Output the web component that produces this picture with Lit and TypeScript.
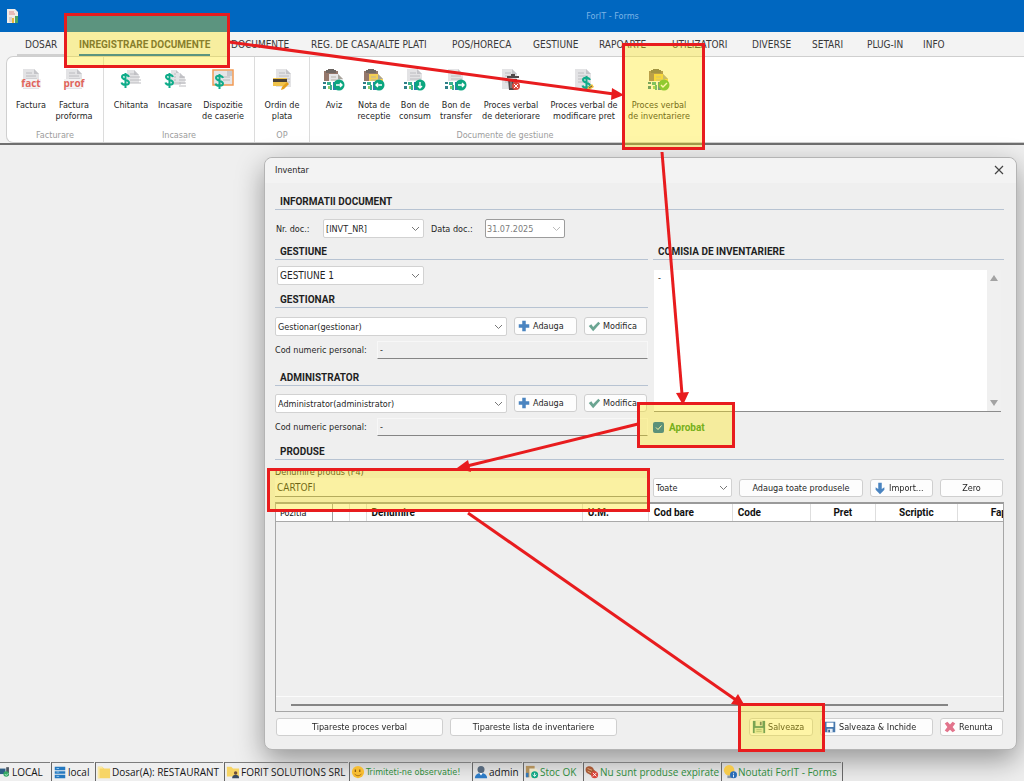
import { LitElement, html, svg, css, nothing } from "lit";
import { customElement, state, query } from "lit/decorators.js";
import { classMap } from "lit/directives/class-map.js";

const sheet = (x = 4, y = 1, w = 17, h = 20) => svg`
  <path d="M${x} ${y}h${w - 5}l5 5v${h - 5}h${-w}z" fill="#e3e3e5"/>
  <path d="M${x + w - 5} ${y}v5h5z" fill="#c4c4c8"/>
  <path d="M${x + 3} ${y + 4}h6M${x + 3} ${y + 7}h10M${x + 3} ${y + 10}h11M${x + 3} ${y + 13}h11" stroke="#bcbcc0" stroke-width="1"/>`;

const board = (color: string) => svg`
  <path d="M1 2h14v13H1z" fill="#94776b"/><path d="M5 0h6v3H5z" fill="#6b6460"/><path d="M3 1h10v3H3z" fill="#6f6762"/>
  <path d="M6 5h9l5 5v8H6z" fill="${color}"/><path d="M15 5v5h5z" fill="#a9a49c"/>
  <path d="M8 8h5M8 11h9" stroke="#b9b3a8"/>`;

const stock = svg`
  <path d="M0 12h13v10H0z" fill="#fff"/>
  <path d="M0 13h3v2H0zM0 17h3v3H0z" fill="#2f7f88"/><path d="M4 13h4v3H4zM7 16h2v5H7z" fill="#38b08f"/>
  <path d="M5 17h2v3H5z" fill="#8ccf6a"/><path d="M10 13h3v8h-3z" fill="#3477b5"/>`;

const badge = (d: string, color = "#0ba67f") => svg`
  <circle cx="16" cy="16" r="5.500" fill="${color}"/>
  <path d="${d}" stroke="#fff" stroke-width="1.4" fill="none"/>`;

const RIGHT = "M13 16h6M17 14l2 2-2 2";
const LEFT = "M19 16h-6M15 14l-2 2 2 2";
const DOWN = "M16 13v6M14 17l2 2 2-2";
const CHECK = "M13 16l2 2 4-4";

const dollar = (x: number, y: number) => svg`
  <path d="M${x + 8} ${y + 4}c-1-3-7-3-7 0s7 2.500 7 5.500-7 3-7.500 0M${x + 4.5} ${y}v15"
    fill="none" stroke="#10ac8a" stroke-width="2"/>`;

const ribbonIcons: Record<string, unknown> = {
  fact: svg`${sheet(3, 0, 16)}<path d="M1 10h20v9H1z" fill="#f3f3f4"/><text x="11" y="18" class="stamp">fact</text>`,
  prof: svg`${sheet(3, 0, 16)}<path d="M1 10h20v9H1z" fill="#f3f3f4"/><text x="11" y="18" class="stamp">prof</text>`,
  receipt: svg`${sheet(7, 1, 12, 13)}${dollar(1, 4)}`,
  cashin: svg`${sheet(7, 1, 10, 15)}${sheet(12, 4, 9, 9)}${dollar(1, 4)}`,
  slip: svg`<path d="M1 1h20v15H1z" fill="#e5e5e7" stroke="#f29a54" stroke-width="1.500"/><path d="M15 2h5v5h-5z" fill="#c8c8cc"/><path d="M11 8h7M11 11h7" stroke="#bbb"/>${dollar(3, 5)}`,
  card: svg`${sheet(5, 0, 15, 18)}<path d="M2 9h14v8H2z" fill="#f0c34a"/><path d="M2 10h14v3H2z" fill="#473f36"/><path d="M11 18l5-5 2 2-5 5-3 1z" fill="#e4a01d"/>`,
  aviz: svg`${board("#e6e6e8")}${stock}${badge(RIGHT)}`,
  nota: svg`${board("#f4cf55")}${stock}${badge(LEFT)}`,
  consum: svg`${sheet(3, 0, 15)}${stock}${badge(DOWN)}`,
  transfer: svg`${sheet(3, 0, 15)}${stock}${badge(RIGHT)}`,
  trash: svg`${sheet(2, 0, 15)}<path d="M7 7h12v2H7zM11 5h4v2h-4zM8 10h9l-1 11H9z" fill="#50494a"/><path d="M11 11v8M14 11v8" stroke="#a9a3a3"/><circle cx="16" cy="17" r="4" fill="#dd4b40"/><path d="M14 15l4 4M18 15l-4 4" stroke="#fff"/>`,
  price: svg`${sheet(2, 0, 16, 20)}${dollar(9, 7)}<path d="M14 19l5-4 2 3-5 3z" fill="#f0bd36"/><path d="M16 19l3-2" stroke="#555"/>`,
  inventory: svg`${board("#f4cf55")}${stock}${badge(CHECK, "#52ba45")}`,
};

const smallIcons: Record<string, unknown> = {
  plus: svg`<path d="M6 2h4v4h4v4h-4v4H6v-4H2V6h4z" fill="#4a84c0"/>`,
  tick: svg`<path d="M2 8l3-2 2 3 6-6 2 2-8 9z" fill="#6ba592"/>`,
  down: svg`<path d="M6 2h4v7l3-2v3l-5 5-5-5V7l3 2z" fill="#4a84c0"/>`,
  disk: svg`<path d="M1 1h14v14H1z" fill="#2f7f7a"/><path d="M4 1h8v6H4z" fill="#e9efe4"/><path d="M3 9h10v6H3z" fill="#dbe9d4"/><path d="M9 2h2v4H9z" fill="#46617a"/><path d="M5 11h6M5 13h6" stroke="#8fae9c"/>`,
  diskBlue: svg`<path d="M2 2h12v12H2z" fill="#4778ad"/><path d="M4 3h8v5H4z" fill="#fff"/><path d="M5 10h6v4H5z" fill="#e4ecf5"/><path d="M6 11h2v3H6z" fill="#38608c"/>`,
  cross: svg`<path d="M2 4l3-2 3 3 3-3 3 2-3 4 3 4-3 2-3-3-3 3-3-2 3-4z" fill="#e2748c"/>`,
  pc: svg`<path d="M0 3h8v8H0z" fill="#2e5f86"/><path d="M9 1h4v12H9z" fill="#4d5560"/><circle cx="9" cy="11" r="4" fill="#34a963"/><path d="M7 11l2 2 3-3" stroke="#fff" fill="none"/>`,
  server: svg`<path d="M2 2h12v4H2zM2 7h12v3H2zM2 11h12v4H2z" fill="#2579c0"/><path d="M4 4h3M4 8h3M4 13h3" stroke="#9fd0f3"/>`,
  folder: svg`<path d="M1 2h5l2 2h7v11H1z" fill="#f7d566"/><path d="M1 2h5l1 2H3v11H1z" fill="#fbe9a4"/>`,
  folderUser: svg`<path d="M1 2h5l2 2h7v9H1z" fill="#f7d566"/><circle cx="11" cy="9" r="2" fill="#6b4d3b"/><path d="M7 15c0-5 8-5 8 0z" fill="#394a62"/>`,
  smile: svg`<circle cx="8" cy="8" r="7" fill="#f6bd32"/><path d="M5 5v3M10 5v3" stroke="#8d5c13" stroke-width="1.500"/><path d="M4 10c2 3 6 3 8 0" stroke="#a86a14" fill="none"/>`,
  user: svg`<circle cx="8" cy="5" r="4" fill="#56687c"/><path d="M1 15c0-8 14-8 14 0z" fill="#2d7ac4"/><path d="M6 9l2 3 2-3z" fill="#fff"/>`,
  stockOk: svg`<path d="M1 1h10v13H1z" fill="#b08f5b"/><path d="M5 4h8l2 3v8H5z" fill="#e9e3c8"/><path d="M1 9h3v5H1z" fill="#3477b5"/><circle cx="11" cy="11" r="4" fill="#12a584"/><path d="M11 9v4M9 11l2 2 2-2" stroke="#fff" fill="none"/>`,
  expired: svg`<path d="M1 3c4-3 8-1 9 2l3 3-4 5-5-3C1 9 0 6 1 3z" fill="#a65835"/><path d="M3 4l5 2M3 7l4 2" stroke="#e4b183"/><circle cx="11" cy="11" r="4" fill="#d8463c"/><path d="M9 9l4 4M13 9l-4 4" stroke="#fff"/>`,
  news: svg`<circle cx="7" cy="6" r="6" fill="#f4c94b"/><path d="M5 12h5v3H5z" fill="#8b97a3"/><circle cx="12" cy="11" r="4" fill="#2a6db8"/><path d="M12 9v1M12 11v3" stroke="#fff"/>`,
};

const icon = (name: string) =>
  html`<svg class="ico" viewBox="0 0 16 16" aria-hidden="true">${smallIcons[name]}</svg>`;

const tabs = [
  "DOSAR", "INREGISTRARE DOCUMENTE", "DOCUMENTE", "REG. DE CASA/ALTE PLATI", "POS/HORECA", "GESTIUNE",
  "RAPOARTE", "UTILIZATORI", "DIVERSE", "SETARI", "PLUG-IN", "INFO",
];

const groups = [
  { cls: "g-fact", title: "Facturare", items: [["fact", "Factura", ""], ["prof", "Factura", "proforma"]] },
  { cls: "g-inc", title: "Incasare", items: [["receipt", "Chitanta", ""], ["cashin", "Incasare", ""], ["slip", "Dispozitie", "de caserie"]] },
  { cls: "g-op", title: "OP", items: [["card", "Ordin de", "plata"]] },
  {
    cls: "g-gest", title: "Documente de gestiune", items: [
      ["aviz", "Aviz", ""], ["nota", "Nota de", "receptie"], ["consum", "Bon de", "consum"], ["transfer", "Bon de", "transfer"],
      ["trash", "Proces verbal", "de deteriorare"], ["price", "Proces verbal de", "modificare pret"], ["inventory", "Proces verbal", "de inventariere"],
    ],
  },
];

const columns = [
  ["c-poz", "Pozitia"], ["c-mini", ""], ["c-mini", ""], ["c-den", "Denumire"], ["c-um", "U.M."],
  ["c-bar", "Cod bare"], ["c-code", "Code"], ["c-pret", "Pret"], ["c-scr", "Scriptic"], ["c-fap", "Faptic"],
];

const statusItems = [
  ["s-server", "pc", "LOCAL"], ["s-db", "server", "local"], ["s-dosar", "folder", "Dosar(A): RESTAURANT"],
  ["s-firma", "folderUser", "FORIT SOLUTIONS SRL"], ["s-obs", "smile", "Trimiteti-ne observatie!"], ["s-user", "user", "admin"],
  ["s-stoc", "stockOk", "Stoc OK"], ["s-exp", "expired", "Nu sunt produse expirate"], ["s-news", "news", "Noutati ForIT - Forms"],
];

@customElement("app-root")
export class AppRoot extends LitElement {
  @state() private activeTab = 1;
  @query("#prod") private search!: HTMLInputElement;

  static styles = css`
    :host {
      display: flex; flex-direction: column; position: relative; min-height: 100vh; overflow: hidden;
      font: 9px/12px "DejaVu Sans Condensed", "DejaVu Sans", sans-serif; color: #1f1f1f; background: #efefef;
      --bold: "Roboto", sans-serif;
    }
    * { box-sizing: border-box; }
    button, input, select, textarea { font: inherit; color: inherit; margin: 0; }
    button { border: 0; background: none; padding: 0; }

    .titlebar {
      height: 32px; flex: none; background: #0067c0; color: #7db4e6; display: grid;
      grid-template-columns: 201px 1fr; align-items: center;
    }
    .titlebar svg { width: 14px; height: 16px; margin-left: 5px; }
    .titlebar span { text-align: center; }

    .tabs {
      display: grid; grid-template-columns: 62px 152px 80px 141px 81px 66px 73px 80px 60px 55px 56px 40px;
      height: 24px; flex: none; padding-left: 17px; background: #f3f3f3; font-size: 10px; color: #383838;
    }
    .tab { display: flex; text-align: left; white-space: nowrap; height: 24px; }
    .tab span { height: 24px; padding-top: 7px; border-bottom: 2px solid transparent; }
    .tab.first span { border-color: #d0d0d0; padding-left: 8px; width: 50px; }
    .tab.active span { border-color: #0067c0; color: #45453f; font-family: var(--bold); font-weight: 700; }

    .ribbon { flex: none; height: 89px; padding-left: 6px; background: #f3f3f3; border-bottom: 2px solid #6f6f6f; }
    .panel {
      display: flex; height: 87px; background: #fff; border: 1px solid #cfcfcf; border-right: 0;
      border-radius: 7px 0 0 7px;
    }
    .group { display: flex; flex-direction: column; border-right: 1px solid #dcdcdc; }
    .group:last-child { border-right: 0; }
    .group-buttons { display: grid; flex: 1; }
    .g-fact .group-buttons { grid-template-columns: 46px 40px; padding: 0 9px 0 1px; }
    .g-inc .group-buttons { grid-template-columns: 44px 44px 52px; padding: 0 5px; }
    .g-op .group-buttons { grid-template-columns: 54px; }
    .g-gest .group-buttons { grid-template-columns: 40px 40px 42px 40px 70px 76px 74px; padding: 0 4px; }
    .rb { display: flex; flex-direction: column; align-items: center; padding-top: 12px; line-height: 11px; white-space: nowrap; }
    .rb svg { width: 22px; height: 22px; margin-bottom: 9px; }
    .stamp { font: 700 10px "Open Sans", sans-serif; fill: #e0655c; text-anchor: middle; }
    .group-title { text-align: center; color: #9c9c9c; height: 14px; line-height: 14px; }

    .desk { flex: 1; display: flex; padding: 12px 7px 11px 264px; }
    .dialog {
      flex: 1; min-width: 0; border: 1px solid #b4b4b4; border-radius: 8px; background: #efefef;
      box-shadow: 0 10px 28px rgba(0, 0, 0, .38); display: flex; flex-direction: column; align-self: flex-start;
    }
    .dialog-title {
      display: flex; justify-content: space-between; align-items: center; height: 25px; flex: none;
      padding: 0 12px 2px 10px; background: #f3f3f3; border-radius: 8px 8px 0 0;
    }
    .close { display: flex; }
    .close svg { width: 10px; height: 10px; }
    .dialog-body { padding: 10px 12px 13px 10px; display: flex; flex-direction: column; }
    h2 {
      margin: 0; height: 17px; padding-left: 5px; border-bottom: 1px solid #b7c3d2;
      font: 700 10px/18px var(--bold);
    }
    .doc-row { display: flex; align-items: center; padding: 9px 0 5px 1px; }
    .doc-row .num-label { width: 38px; }
    .doc-row .num { width: 101px; margin: 0 7px 0 9px; }
    .doc-row .date-label { width: 45px; }
    .doc-row .date { width: 80px; margin-left: 9px; }
    .columns { display: grid; grid-template-columns: 373px 1fr; column-gap: 5px; }
    .col { display: flex; flex-direction: column; }
    select {
      appearance: none; height: 19px; border: 1px solid #d2d2d2; border-radius: 2px; padding: 0 18px 0 2px;
      background: #fff url("data:image/svg+xml,%3Csvg xmlns='http://www.w3.org/2000/svg' width='9' height='6'%3E%3Cpath d='M1 1l3.500 3.500L8 1' fill='none' stroke='%23777'/%3E%3C/svg%3E") no-repeat right 3px center;
    }
    select.date {
      border: 1px solid #9c9c9c; color: #7c7c7c; opacity: 1; padding-left: 1px;
      background-image: url("data:image/svg+xml,%3Csvg xmlns='http://www.w3.org/2000/svg' width='9' height='6'%3E%3Cpath d='M1 1l3.500 3.500L8 1' fill='none' stroke='%23bbb'/%3E%3C/svg%3E");
    }
    .gest { width: 147px; margin: 6px 0 6px 2px; font-size: 10px; }
    .person-row { display: grid; grid-template-columns: 1fr 63px 63px; column-gap: 7px; margin: 9px 0 4px; padding-right: 1px; }
    .person-row.second { margin-top: 8px; }
    .cnp { display: grid; grid-template-columns: 102px 1fr; align-items: center; height: 19px; }
    .cnp input {
      height: 18px; border: 1px solid #f7f7f7; border-bottom-color: #858585; background: none; padding: 0 2px; width: 100%;
    }
    .gap { margin-top: 10px; }
    .btn {
      display: flex; align-items: center; justify-content: center; height: 18px; background: #fdfdfd;
      border: 1px solid #cfcfcf; border-radius: 3px; white-space: nowrap; padding: 0 2px;
    }
    .btn.lead { justify-content: flex-start; gap: 2px; }
    .ico { width: 14px; height: 14px; flex: none; }

    .memo { display: flex; height: 142px; margin: 10px 3px 6px 1px; background: #fff; border-bottom: 1px solid #8c8c8c; }
    .memo textarea { flex: 1; border: 0; resize: none; padding: 2px 4px; background: #fff; outline: 0; }
    .scroll { width: 14px; background: #f0f0f0; display: flex; flex-direction: column; justify-content: space-between; align-items: center; padding: 5px 0; }
    .scroll svg { width: 8px; height: 6px; }
    .approve { display: flex; align-items: center; height: 19px; gap: 5px; color: #289128; font: 700 10px/14px var(--bold); }
    .approve input {
      appearance: none; width: 11px; height: 11px; border-radius: 2px; flex: none;
      background: #0061b8 url("data:image/svg+xml,%3Csvg xmlns='http://www.w3.org/2000/svg' width='11' height='11'%3E%3Cpath d='M3 5.500l2 2 3.500-4' fill='none' stroke='%23fff'/%3E%3C/svg%3E");
    }

    .products-head { margin: 6px 0; }
    .product-row { display: grid; grid-template-columns: 373px 1fr; column-gap: 5px; align-items: end; }
    .search { display: flex; flex-direction: column; }
    .search input {
      height: 19px; border: 0; border-bottom: 1px solid #8a8a8a; background: #f7f7f7; padding: 0 2px; outline: 0;
      font-size: 10px;
    }
    .tools { display: grid; grid-template-columns: 79px 1fr 63px 63px; column-gap: 7px; align-items: center; padding-right: 1px; }

    .grid-box {
      margin: 5px 0 6px; height: 210px; border: 1px solid #a6a6a6; border-top: 2px solid #9a9a9a; overflow: hidden;
      display: flex; flex-direction: column; justify-content: space-between;
    }
    table { border-collapse: collapse; table-layout: fixed; width: 776px; }
    th {
      height: 17px; background: #fff; border-right: 1px solid #dedede; border-bottom: 1px solid #a9a9a9; text-align: left;
      padding: 1px 5px 0; font: 700 10px/14px var(--bold); white-space: nowrap; color: #111;
    }
    .c-poz { width: 56px; font: 9px/14px "DejaVu Sans Condensed", sans-serif; border-right-color: #a0a0a0; padding-left: 4px; }
    .c-mini { width: 17px; }
    .c-den { width: 216px; }
    .c-um { width: 66px; }
    .c-bar { width: 84px; }
    .c-code { width: 78px; }
    .c-pret { width: 65px; text-align: center; }
    .c-scr { width: 82px; text-align: center; }
    .c-fap { width: 94px; text-align: center; }
    .hscroll { height: 15px; border-top: 1px solid #fbfbfb; padding: 7px 55px 0 15px; }
    .thumb { height: 2px; background: #858585; }

    .actions { display: grid; grid-template-columns: 167px 167px 1fr 64px 113px 63px; column-gap: 7px; padding: 0 1px; }

    .status { display: flex; flex: none; height: 19px; font: 10px/18px "Open Sans", sans-serif; position: relative; color: #161616; }
    .cell {
      display: flex; align-items: center; gap: 1px; border-top: 1px solid #7d7d7d; border-left: 1px solid #666;
      margin-right: 1px; white-space: nowrap; padding-left: 1px;
    }
    .end { border-left: 1px solid #666; border-top: 1px solid #7d7d7d; width: 1px; }
    .s-server { width: 50px; border-left: 0; padding-left: 0; }
    .s-server .ico { width: 11px; }
    .s-db { width: 43px; }
    .s-dosar { width: 128px; }
    .s-firma { width: 124px; }
    .s-obs { width: 122px; font: 9px/18px "DejaVu Sans Condensed", sans-serif; }
    .s-user { width: 50px; }
    .s-stoc { width: 59px; }
    .s-exp { width: 137px; }
    .s-news { width: 120px; }
    .s-obs, .s-stoc, .s-exp, .s-news { color: #2f8a3c; }

    .marks { position: absolute; left: 0; top: 0; width: 1024px; height: 781px; pointer-events: none; }
    .marks rect { fill: rgba(255, 231, 11, .36); stroke: #e81c1e; stroke-width: 3; }
    .marks line { stroke: #e81c1e; stroke-width: 3; }
    .marks polygon { fill: #e81c1e; }
  `;

  firstUpdated() {
    this.search.focus();
    this.search.setSelectionRange(this.search.value.length, this.search.value.length);
  }

  private person(kind: string, name: string, second: boolean) {
    return html`
      <div class=${classMap({ "person-row": true, second })}>
        <select aria-label=${kind}><option>${name}</option></select>
        <button class="btn lead">${icon("plus")}Adauga</button>
        <button class="btn lead">${icon("tick")}Modifica</button>
      </div>
      <div class="cnp">
        <label for="cnp-${kind}">Cod numeric personal:</label>
        <input id="cnp-${kind}" value="-" />
      </div>`;
  }

  render() {
    return html`
      <header class="titlebar">
        <svg viewBox="0 0 14 16" aria-hidden="true">
          <path d="M2 1h8l3 3v11H2z" fill="#f1ece8"/><path d="M4 4h5M4 6h6" stroke="#d88" />
          <path d="M4 9h3v5H4z" fill="#d9d3cf"/><path d="M7 10h2v5H7z" fill="#e9b83c"/><path d="M10 8h3v7h-3z" fill="#4ca564"/>
        </svg>
        <span>ForIT - Forms</span>
      </header>
      <nav class="tabs">
        ${tabs.map((t, i) => html`
          <button class=${classMap({ tab: true, first: i === 0, active: i === this.activeTab })}
            @click=${() => (this.activeTab = i)}><span>${t}</span></button>`)}
      </nav>
      <section class="ribbon"><div class="panel">
        ${groups.map((g) => html`
          <div class="group ${g.cls}">
            <div class="group-buttons">
              ${g.items.map(([ic, a, b]) => html`
                <button class="rb">
                  <svg viewBox="0 0 22 22" aria-hidden="true">${ribbonIcons[ic]}</svg>
                  <span>${a}</span>${b ? html`<span>${b}</span>` : nothing}
                </button>`)}
            </div>
            <div class="group-title">${g.title}</div>
          </div>`)}
      </div></section>

      <main class="desk">
        <section class="dialog" role="dialog" aria-label="Inventar">
          <div class="dialog-title">
            <span>Inventar</span>
            <button class="close" aria-label="Inchide">
              <svg viewBox="0 0 10 10"><path d="M1 1l8 8M9 1l-8 8" stroke="#444" stroke-width="1.200"/></svg>
            </button>
          </div>
          <div class="dialog-body">
            <h2>INFORMATII DOCUMENT</h2>
            <div class="doc-row">
              <label class="num-label" for="nr">Nr. doc.:</label>
              <select id="nr" class="num"><option>[INVT_NR]</option></select>
              <label class="date-label" for="data">Data doc.:</label>
              <select id="data" class="date" disabled><option>31.07.2025</option></select>
            </div>
            <div class="columns">
              <div class="col">
                <h2>GESTIUNE</h2>
                <select class="gest" aria-label="Gestiune"><option>GESTIUNE 1</option></select>
                <h2>GESTIONAR</h2>
                ${this.person("gestionar", "Gestionar(gestionar)", false)}
                <h2 class="gap">ADMINISTRATOR</h2>
                ${this.person("administrator", "Administrator(administrator)", true)}
              </div>
              <div class="col">
                <h2>COMISIA DE INVENTARIERE</h2>
                <div class="memo">
                  <textarea aria-label="Comisia de inventariere" .value=${"-"}></textarea>
                  <div class="scroll" aria-hidden="true">
                    <svg viewBox="0 0 8 6"><path d="M4 0l4 6H0z" fill="#a3a3a3"/></svg>
                    <svg viewBox="0 0 8 6"><path d="M4 6l4-6H0z" fill="#a3a3a3"/></svg>
                  </div>
                </div>
                <label class="approve"><input type="checkbox" checked />Aprobat</label>
              </div>
            </div>
            <h2 class="products-head">PRODUSE</h2>
            <div class="product-row">
              <div class="search">
                <label for="prod">Denumire produs (F4)</label>
                <input id="prod" value="CARTOFI" />
              </div>
              <div class="tools">
                <select aria-label="Filtru"><option>Toate</option></select>
                <button class="btn">Adauga toate produsele</button>
                <button class="btn lead">${icon("down")}Import...</button>
                <button class="btn">Zero</button>
              </div>
            </div>
            <div class="grid-box">
              <table><thead><tr>${columns.map(([c, t]) => html`<th class=${c}>${t}</th>`)}</tr></thead></table>
              <div class="hscroll"><div class="thumb"></div></div>
            </div>
            <div class="actions">
              <button class="btn">Tipareste proces verbal</button>
              <button class="btn">Tipareste lista de inventariere</button>
              <span></span>
              <button class="btn lead">${icon("disk")}Salveaza</button>
              <button class="btn lead">${icon("diskBlue")}Salveaza &amp; Inchide</button>
              <button class="btn lead">${icon("cross")}Renunta</button>
            </div>
          </div>
        </section>
      </main>

      <footer class="status">
        ${statusItems.map(([c, ic, t]) => html`<div class="cell ${c}">${icon(ic)}<span>${t}</span></div>`)}
        <div class="end"></div>
      </footer>

      <svg class="marks" viewBox="0 0 1024 781" aria-hidden="true">
        <rect x="65.5" y="14.5" width="163" height="52"/>
        <rect x="623.5" y="44.5" width="80" height="104"/>
        <rect x="638.5" y="403.5" width="95" height="43"/>
        <rect x="268.5" y="469.5" width="380" height="41"/>
        <rect x="739.5" y="704.5" width="84" height="46"/>
        <line x1="229" y1="42" x2="614" y2="94"/><polygon points="624,95 611,100 612,88"/>
        <line x1="662" y1="152" x2="682" y2="394"/><polygon points="683,405 676,393 689,392"/>
        <line x1="638" y1="424" x2="467" y2="466"/><polygon points="457,468 468,460 471,472"/>
        <line x1="468" y1="513" x2="736" y2="700"/><polygon points="745,706 731,704 738,694"/>
      </svg>
    `;
  }
}
